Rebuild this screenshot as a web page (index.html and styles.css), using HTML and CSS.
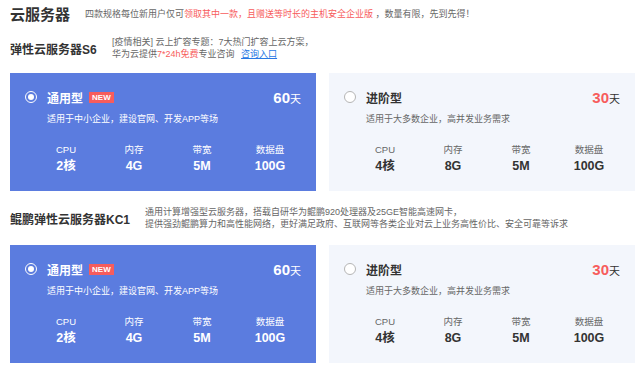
FILE: index.html
```html
<!DOCTYPE html>
<html lang="zh-CN">
<head>
    <meta charset="UTF-8">
    <meta name="viewport" content="width=device-width, initial-scale=1.0">
    <title>云服务器</title>
    <link rel="stylesheet" href="styles.css">
</head>
<body>
    <div class="page">
        <div class="top-bar">
            <h1>云服务器</h1>
            <p class="notice">四款规格每位新用户仅可<span class="hot">领取其中一款，且赠送等时长的主机安全企业版</span> ，数量有限，先到先得！</p>
        </div>

        <section class="product">
            <div class="product-head">
                <h2>弹性云服务器S6</h2>
                <p class="product-desc">
                    [疫情相关] 云上扩容专题：7大热门扩容上云方案，<br>
                    华为云提供<span class="hot">7*24h免费</span>专业咨询 <a href="#" class="link">咨询入口</a>
                </p>
            </div>
            <div class="plans">
                <div class="plan plan-active">
                    <div class="plan-title">
                        <span class="radio"></span>
                        <span class="plan-name">通用型</span>
                        <span class="badge">NEW</span>
                        <span class="plan-days"><b>60</b>天</span>
                    </div>
                    <p class="plan-desc">适用于中小企业，建设官网、开发APP等场</p>
                    <div class="specs">
                        <div class="spec"><span>CPU</span><b>2核</b></div>
                        <div class="spec"><span>内存</span><b>4G</b></div>
                        <div class="spec"><span>带宽</span><b>5M</b></div>
                        <div class="spec"><span>数据盘</span><b>100G</b></div>
                    </div>
                </div>
                <div class="plan">
                    <div class="plan-title">
                        <span class="radio"></span>
                        <span class="plan-name">进阶型</span>
                        <span class="plan-days"><b>30</b>天</span>
                    </div>
                    <p class="plan-desc">适用于大多数企业，高并发业务需求</p>
                    <div class="specs">
                        <div class="spec"><span>CPU</span><b>4核</b></div>
                        <div class="spec"><span>内存</span><b>8G</b></div>
                        <div class="spec"><span>带宽</span><b>5M</b></div>
                        <div class="spec"><span>数据盘</span><b>100G</b></div>
                    </div>
                </div>
            </div>
        </section>

        <section class="product">
            <div class="product-head">
                <h2>鲲鹏弹性云服务器KC1</h2>
                <p class="product-desc">
                    通用计算增强型云服务器，搭载自研华为鲲鹏920处理器及25GE智能高速网卡，<br>
                    提供强劲鲲鹏算力和高性能网络，更好满足政府、互联网等各类企业对云上业务高性价比、安全可靠等诉求
                </p>
            </div>
            <div class="plans">
                <div class="plan plan-active">
                    <div class="plan-title">
                        <span class="radio"></span>
                        <span class="plan-name">通用型</span>
                        <span class="badge">NEW</span>
                        <span class="plan-days"><b>60</b>天</span>
                    </div>
                    <p class="plan-desc">适用于中小企业，建设官网、开发APP等场</p>
                    <div class="specs">
                        <div class="spec"><span>CPU</span><b>2核</b></div>
                        <div class="spec"><span>内存</span><b>4G</b></div>
                        <div class="spec"><span>带宽</span><b>5M</b></div>
                        <div class="spec"><span>数据盘</span><b>100G</b></div>
                    </div>
                </div>
                <div class="plan">
                    <div class="plan-title">
                        <span class="radio"></span>
                        <span class="plan-name">进阶型</span>
                        <span class="plan-days"><b>30</b>天</span>
                    </div>
                    <p class="plan-desc">适用于大多数企业，高并发业务需求</p>
                    <div class="specs">
                        <div class="spec"><span>CPU</span><b>4核</b></div>
                        <div class="spec"><span>内存</span><b>8G</b></div>
                        <div class="spec"><span>带宽</span><b>5M</b></div>
                        <div class="spec"><span>数据盘</span><b>100G</b></div>
                    </div>
                </div>
            </div>
        </section>
    </div>
</body>
</html>
```

FILE: styles.css
```css
:root {
    --blue: #5b7cdf;
    --grey-card: #f3f6fc;
    --red: #f75c5c;
    --text: #333;
    --muted: #666;
}

* {
    margin: 0;
    padding: 0;
    box-sizing: border-box;
}

body {
    font-family: 'Liberation Sans', 'Noto Sans CJK SC', sans-serif;
    background-color: white;
    color: var(--text);
}

.page {
    width: 625px;
    margin-left: 10px;
}

.top-bar {
    display: flex;
    align-items: center;
    height: 26px;
}

.top-bar h1 {
    font-size: 15px;
    font-weight: bold;
    width: 75px;
}

.notice {
    font-size: 9px;
    color: var(--muted);
}

.hot {
    color: var(--red);
}

.product-head {
    display: flex;
    align-items: center;
    margin-top: 10px;
}

.product + .product .product-head {
    margin-top: 15px;
}

.product-head h2 {
    font-size: 12px;
    font-weight: bold;
    width: 102px;
    flex-shrink: 0;
}

.product + .product .product-head h2 {
    width: 135px;
}

.product-desc {
    font-size: 9px;
    line-height: 12px;
    color: var(--muted);
}

.link {
    color: #2a78e4;
    margin-left: 4px;
}

.plans {
    display: flex;
    gap: 13px;
    margin-top: 13px;
}

.product + .product .plans {
    margin-top: 15px;
}

.plan {
    width: 306px;
    height: 118px;
    background-color: var(--grey-card);
    padding: 16px 15px 0 15px;
}

.plan-title {
    display: flex;
    align-items: center;
    height: 16px;
}

.radio {
    width: 12px;
    height: 12px;
    border-radius: 50%;
    border: 1px solid #b5b5b5;
    background-color: white;
    margin-right: 10px;
}

.plan-name {
    font-size: 12px;
    font-weight: bold;
}

.badge {
    background-color: var(--red);
    color: white;
    font-size: 8px;
    font-weight: bold;
    padding: 1px 3px;
    margin-left: 6px;
    line-height: 9px;
}

.plan-days {
    margin-left: auto;
    font-size: 11px;
}

.plan-days b {
    font-size: 15px;
    color: var(--red);
}

.plan-desc {
    font-size: 9px;
    line-height: 14px;
    color: var(--muted);
    margin: 7px 0 0 22px;
}

.specs {
    display: grid;
    grid-template-columns: repeat(4, 68px);
    margin: 17px 0 0 7px;
}

.spec {
    display: flex;
    flex-direction: column;
    align-items: center;
}

.spec span {
    font-size: 9.5px;
    line-height: 14px;
    color: var(--muted);
}

.spec b {
    font-size: 12.5px;
    line-height: 18px;
}

.plan-active {
    background-color: var(--blue);
    color: white;
}

.plan-active .radio {
    border: 1.5px solid white;
    background-color: var(--blue);
    display: flex;
    align-items: center;
    justify-content: center;
}

.plan-active .radio::after {
    content: "";
    width: 6px;
    height: 6px;
    border-radius: 50%;
    background-color: white;
}

.plan-active .plan-days b {
    color: white;
}

.plan-active .plan-desc,
.plan-active .spec span {
    color: white;
}
```
